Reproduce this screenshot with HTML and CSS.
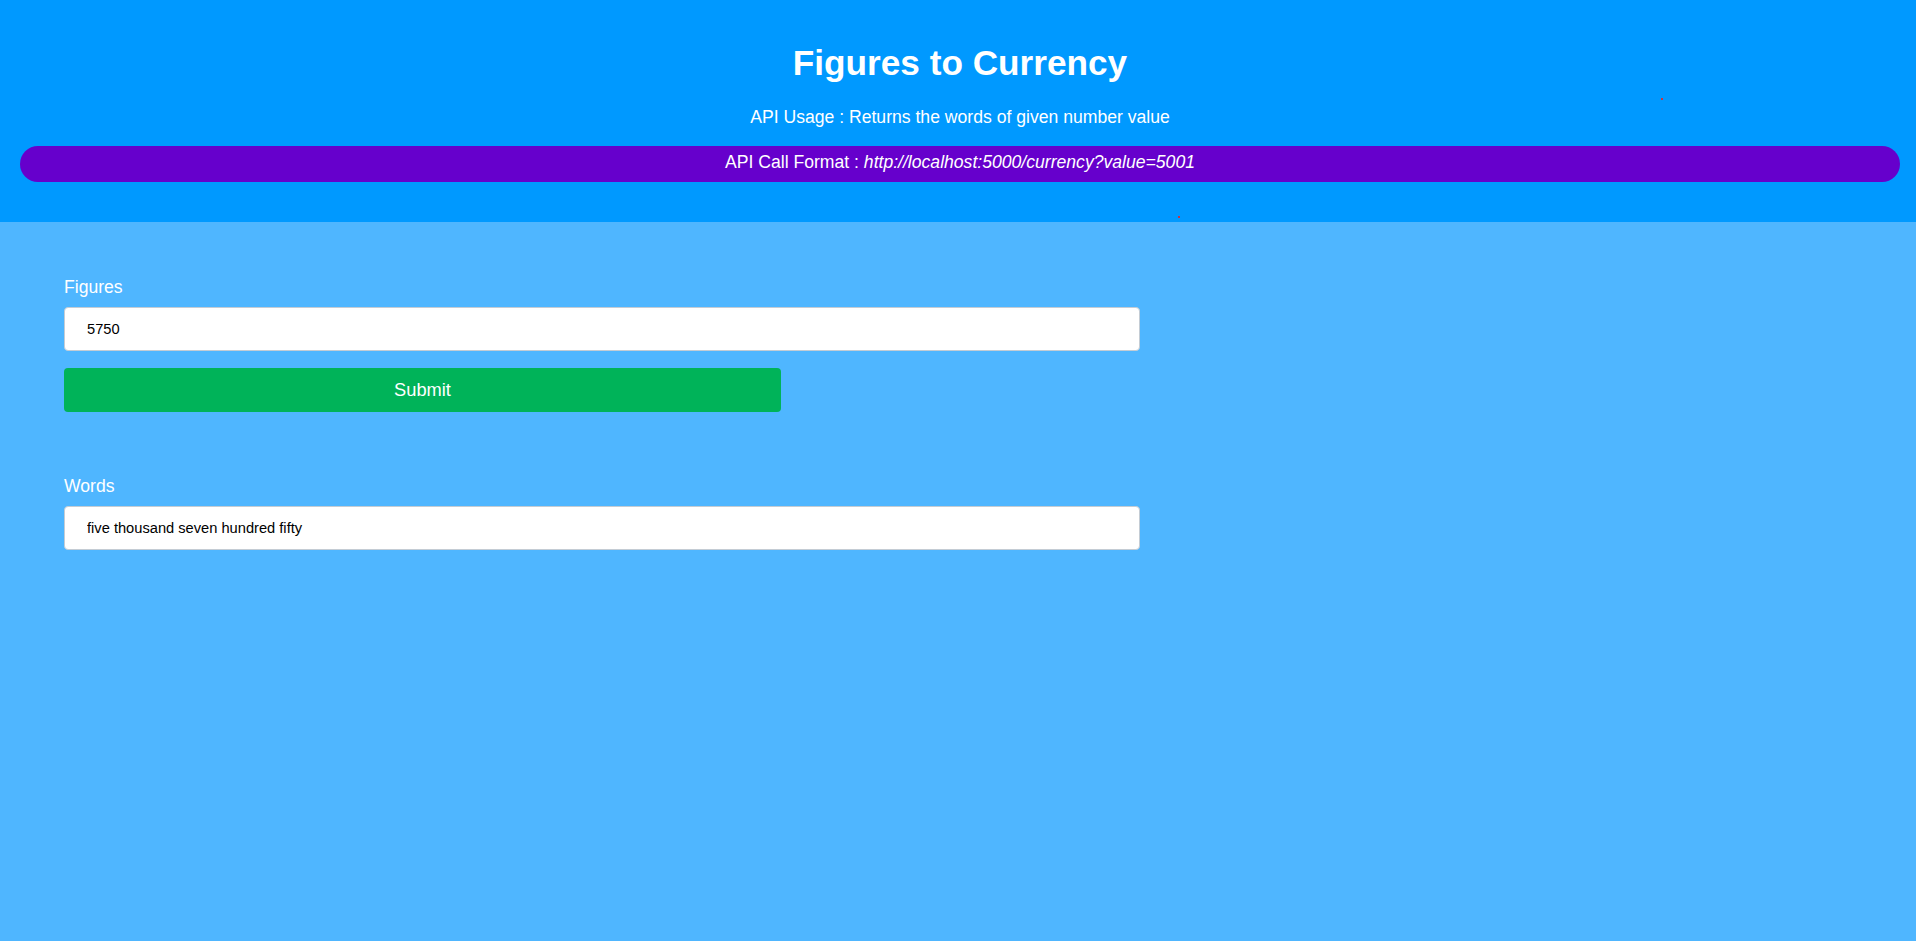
FILE: index.html
```html
<!DOCTYPE html>
<html lang="en">
<head>
<meta charset="utf-8">
<title>Figures to Currency</title>
<link rel="stylesheet" href="styles.css">
</head>
<body>
<header class="hero">
  <h1 class="hero-title">Figures to Currency</h1>
  <p class="hero-usage">API Usage : Returns the words of given number value</p>
  <div class="hero-format">API Call Format : <em>http://localhost:5000/currency?value=5001</em></div>
</header>
<main class="content">
  <form class="converter">
    <div class="field">
      <label class="field-label" for="figures">Figures</label>
      <input class="field-input" id="figures" type="text" value="5750">
    </div>
    <button class="submit-btn" type="button">Submit</button>
    <div class="field field-words">
      <label class="field-label" for="words">Words</label>
      <input class="field-input" id="words" type="text" value="five thousand seven hundred fifty">
    </div>
  </form>
</main>
<span class="dot dot-a"></span>
<span class="dot dot-b"></span>
</body>
</html>
```

FILE: styles.css
```css
html, body {
  margin: 0;
  padding: 0;
}

body {
  position: relative;
  min-height: 941px;
  background: #4fb6ff;
  font-family: "Liberation Sans", Arial, sans-serif;
  color: #ffffff;
}

.hero {
  background: #0099ff;
  padding: 43px 16px 40px 20px;
  text-align: center;
}

.hero-title {
  margin: 0;
  font-size: 35.2px;
  line-height: 40px;
  font-weight: bold;
}

.hero-usage {
  margin: 24px 0 0;
  font-size: 17.6px;
  line-height: 20px;
}

.hero-format {
  margin-top: 19px;
  background: #6600cc;
  border-radius: 18px;
  padding: 6px 0 10px;
  font-size: 17.6px;
  line-height: 20px;
}

.hero-format em {
  font-style: italic;
}

.content {
  padding: 55px 64px;
}

.converter {
  width: 1076px;
  display: flex;
  flex-direction: column;
}

.field {
  display: flex;
  flex-direction: column;
}

.field-label {
  font-size: 17.6px;
  line-height: 20px;
  margin-bottom: 10px;
}

.field-input {
  box-sizing: border-box;
  width: 100%;
  height: 44px;
  border: 1px solid #c4ccd4;
  border-radius: 4px;
  padding: 0 22px;
  font-family: "Liberation Sans", Arial, sans-serif;
  font-size: 14.67px;
  color: #000000;
  background: #ffffff;
  outline: none;
}

.submit-btn {
  margin-top: 17px;
  width: 717px;
  height: 44px;
  border: none;
  border-radius: 4px;
  background: #00b359;
  color: #ffffff;
  font-family: "Liberation Sans", Arial, sans-serif;
  font-size: 18.3px;
  cursor: pointer;
}

.field-words {
  margin-top: 64px;
}

.dot {
  position: absolute;
  width: 2px;
  height: 2px;
  background: #d0303c;
}

.dot-a {
  left: 1661px;
  top: 98px;
}

.dot-b {
  left: 1178px;
  top: 216px;
}
```
